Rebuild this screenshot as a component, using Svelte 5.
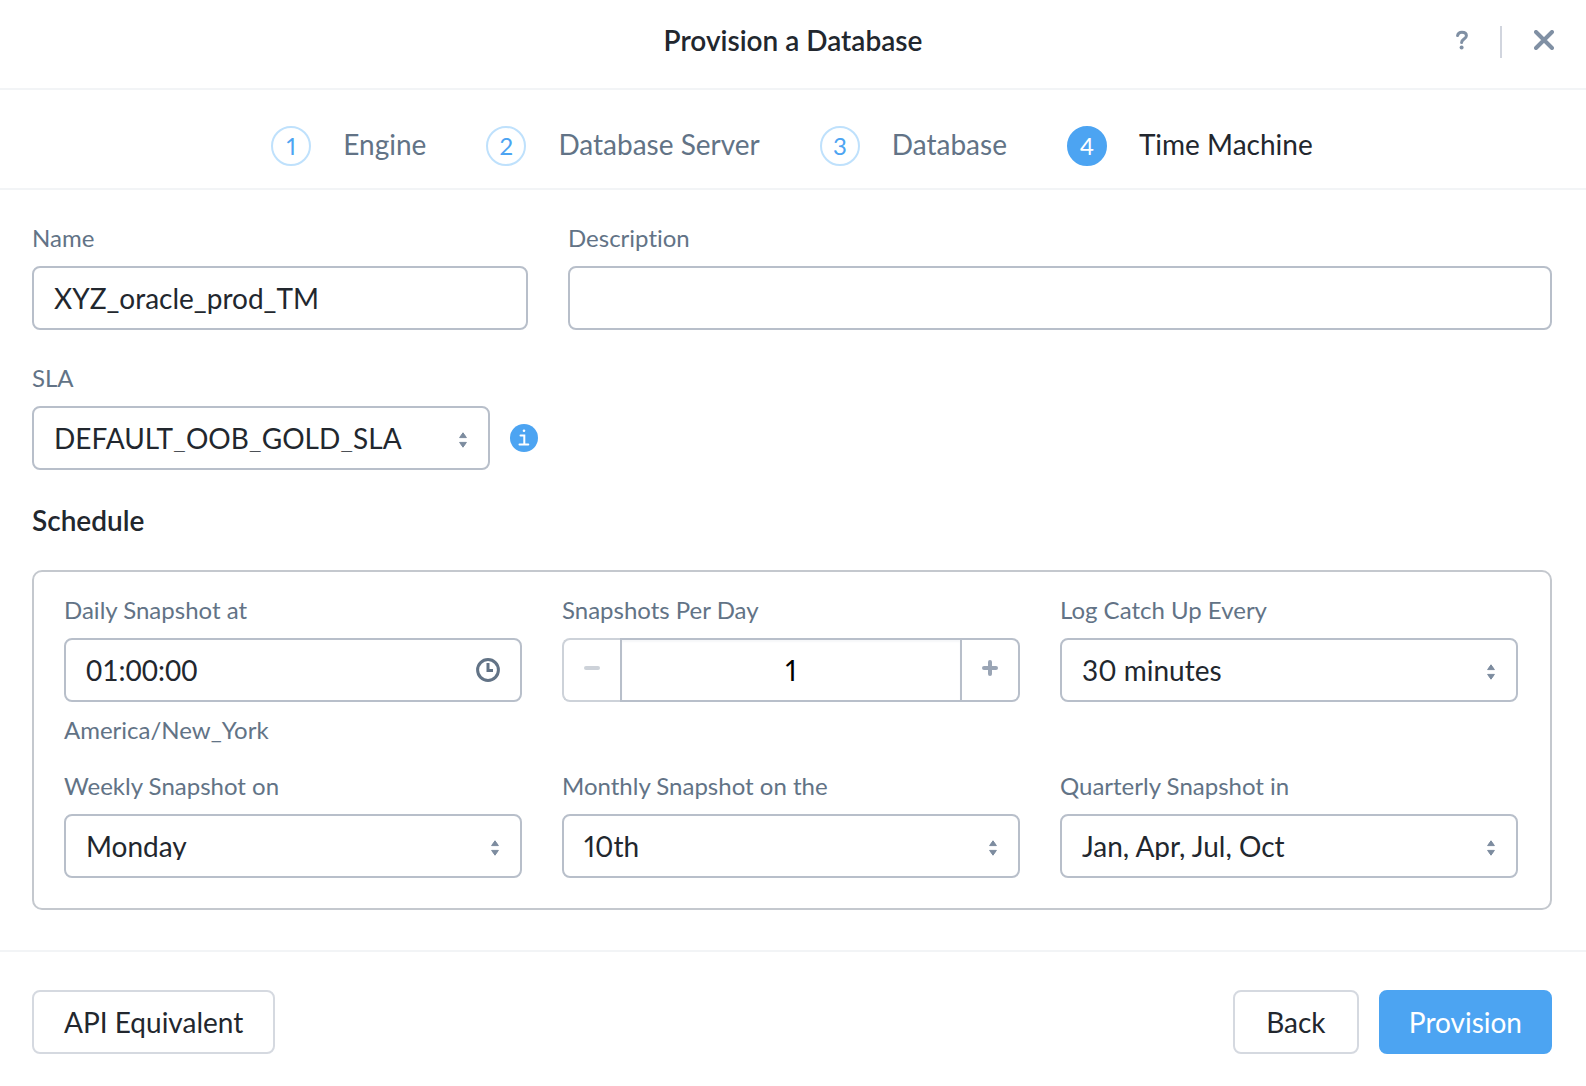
<script>
  const steps = ['Engine', 'Database Server', 'Database', 'Time Machine'];
  const current = 3;

  let name = $state('XYZ_oracle_prod_TM');
  let description = $state('');
  let time = $state('01:00:00');
  let perDay = $state(1);
</script>

{#snippet picker(id, options)}
  <div class="control">
    <select {id} class="field">
      {#each options as option}
        <option>{option}</option>
      {/each}
    </select>
    <svg class="arrows" viewBox="0 0 8 16" aria-hidden="true">
      <path d="M4 0.8 7.4 5.600H0.6ZM4 15.2 7.4 10.400H0.6Z" />
    </svg>
  </div>
{/snippet}

<div class="dialog">
  <header class="titlebar">
    <h1>Provision a Database</h1>
    <div class="tools">
      <button class="tool" aria-label="Help">
        <svg class="help" viewBox="1 0 12 20" aria-hidden="true">
          <path d="M2.600 5.600C3 3.400 4.600 2.200 6.900 2.200c2.700 0 4.500 1.400 4.500 3.600 0 3.200-4.800 3.300-4.800 6.600" />
          <circle cx="6.600" cy="17.600" r="2" />
        </svg>
      </button>
      <span class="divider"></span>
      <button class="tool" aria-label="Close">
        <svg class="close" viewBox="0 0 20 20" aria-hidden="true">
          <path d="M2 2 18 18M18 2 2 18" />
        </svg>
      </button>
    </div>
  </header>

  <ol class="steps">
    {#each steps as step, i}
      <li class="step" class:active={i === current}>
        <span class="number">{i + 1}</span>
        <span class="title">{step}</span>
      </li>
    {/each}
  </ol>

  <main class="body">
    <div class="row identity">
      <div class="group">
        <label for="name">Name</label>
        <input id="name" class="field" type="text" bind:value={name} />
      </div>
      <div class="group">
        <label for="description">Description</label>
        <input id="description" class="field" type="text" bind:value={description} />
      </div>
    </div>

    <div class="group">
      <label for="sla">SLA</label>
      <div class="sla">
        {@render picker('sla', ['DEFAULT_OOB_GOLD_SLA'])}
        <button class="info" aria-label="SLA details">
          <svg viewBox="0 0 28 28" aria-hidden="true">
            <circle cx="14" cy="14" r="14" />
            <path d="M10.500 11.500h3.800v9M9.500 20.500h8.800" />
            <rect x="12.700" y="5.500" width="2.600" height="2.600" rx="1.300" />
          </svg>
        </button>
      </div>
    </div>

    <h2>Schedule</h2>

    <section class="panel">
      <div class="row">
        <div class="group">
          <label for="daily">Daily Snapshot at</label>
          <div class="control">
            <input id="daily" class="field time" type="text" bind:value={time} />
            <svg class="clock" viewBox="0 0 24 24" aria-hidden="true">
              <circle cx="12" cy="12" r="10.400" />
              <path d="M12 5v7.400h5" />
            </svg>
          </div>
          <p class="hint">America/New_York</p>
        </div>
        <div class="group">
          <label for="perday">Snapshots Per Day</label>
          <div class="stepper">
            <button class="less" aria-label="Fewer" disabled={perDay <= 1} onclick={() => (perDay -= 1)}>
              <svg viewBox="0 0 16 16" aria-hidden="true"><path d="M2 8h12" /></svg>
            </button>
            <input id="perday" type="text" inputmode="numeric" bind:value={perDay} />
            <button class="more" aria-label="More" onclick={() => (perDay += 1)}>
              <svg viewBox="0 0 16 16" aria-hidden="true"><path d="M2 8h12M8 2v12" /></svg>
            </button>
          </div>
        </div>
        <div class="group">
          <label for="log">Log Catch Up Every</label>
          {@render picker('log', ['30 minutes'])}
        </div>
      </div>

      <div class="row">
        <div class="group">
          <label for="weekly">Weekly Snapshot on</label>
          {@render picker('weekly', ['Monday'])}
        </div>
        <div class="group">
          <label for="monthly">Monthly Snapshot on the</label>
          {@render picker('monthly', ['10th'])}
        </div>
        <div class="group">
          <label for="quarterly">Quarterly Snapshot in</label>
          {@render picker('quarterly', ['Jan, Apr, Jul, Oct'])}
        </div>
      </div>
    </section>
  </main>

  <footer class="actions">
    <button class="button">API Equivalent</button>
    <button class="button back">Back</button>
    <button class="button primary">Provision</button>
  </footer>
</div>

<style>
  :global(body) {
    margin: 0;
    background: #fff;
  }

  .dialog {
    --ink: #22272e;
    --muted: #627386;
    --icon: #8090a4;
    --line: #b8bfca;
    --rule: #f2f4f6;
    --blue: #4ca4f2;
    font-family: Lato, 'Open Sans', sans-serif;
    font-size: 28px;
    line-height: 28px;
    font-variant-ligatures: none;
    font-variant-numeric: proportional-nums;
    color: var(--ink);
    background: #fff;
  }

  .dialog * {
    box-sizing: border-box;
  }

  h1,
  h2,
  p,
  ol {
    margin: 0;
    padding: 0;
  }

  h1,
  h2 {
    font-size: 28px;
    line-height: 28px;
    font-weight: 600;
  }

  button,
  input,
  select {
    font: inherit;
    font-variant-ligatures: none;
    font-variant-numeric: proportional-nums;
    color: inherit;
    margin: 0;
  }

  button {
    padding: 0;
    border: 0;
    background: none;
    cursor: pointer;
  }

  svg {
    display: block;
  }

  .titlebar {
    display: grid;
    grid-template-columns: 1fr auto 1fr;
    align-items: center;
    padding: 26px 32px 30px;
    border-bottom: 2px solid var(--rule);
  }

  h1 {
    grid-column: 2;
    padding-bottom: 4px;
  }

  .tools {
    display: flex;
    align-items: center;
    justify-content: flex-end;
    gap: 32px;
  }

  .tool {
    padding-bottom: 4px;
  }

  .help {
    width: 12px;
    height: 20px;
    fill: var(--icon);
  }

  .help path {
    fill: none;
    stroke: var(--icon);
    stroke-width: 3;
    stroke-linecap: round;
  }

  .close {
    width: 20px;
    height: 20px;
    stroke: var(--icon);
    stroke-width: 4;
    stroke-linecap: round;
  }

  .divider {
    width: 2px;
    height: 32px;
    background: #d1d5de;
  }

  .steps {
    display: flex;
    justify-content: center;
    gap: 60px;
    padding: 36px 34px 22px 32px;
    border-bottom: 2px solid var(--rule);
    list-style: none;
    color: var(--muted);
  }

  .step {
    display: flex;
    align-items: center;
    gap: 32px;
  }

  .title {
    padding-bottom: 4px;
  }

  .number {
    display: grid;
    place-items: center;
    width: 40px;
    height: 40px;
    border: 2px solid #bfe1fc;
    border-radius: 50%;
    font-size: 24px;
    color: var(--blue);
  }

  .active {
    color: var(--ink);
  }

  .active .number {
    border-color: var(--blue);
    background: var(--blue);
    color: #fff;
  }

  .body {
    display: flex;
    flex-direction: column;
    gap: 36px;
    padding: 36px 34px 40px 32px;
  }

  .row {
    display: grid;
    grid-template-columns: repeat(3, 1fr);
    align-items: start;
    gap: 40px;
  }

  .identity {
    grid-template-columns: 124fr 246fr;
  }

  .group {
    display: flex;
    flex-direction: column;
    gap: 16px;
    min-width: 0;
  }

  label,
  .hint {
    font-size: 24px;
    line-height: 24px;
    color: var(--muted);
  }

  .field {
    display: block;
    width: 100%;
    height: 64px;
    padding: 0 20px;
    border: 2px solid var(--line);
    border-radius: 8px;
    background: #fff;
    appearance: none;
    outline: none;
  }

  .time {
    font-variant-numeric: tabular-nums;
  }

  .control {
    position: relative;
  }

  .arrows {
    position: absolute;
    top: 26px;
    right: 23px;
    width: 8px;
    height: 16px;
    fill: #7d8c9f;
    stroke: #7d8c9f;
    stroke-linejoin: round;
    pointer-events: none;
  }

  .clock {
    position: absolute;
    top: 20px;
    right: 22px;
    width: 24px;
    height: 24px;
    fill: none;
    stroke: var(--muted);
    stroke-width: 3;
    pointer-events: none;
  }

  .sla {
    display: grid;
    grid-template-columns: 458fr 1042fr;
    align-items: center;
    gap: 20px;
  }

  .info {
    width: 28px;
    height: 28px;
  }

  .info circle {
    fill: var(--blue);
  }

  .info rect {
    fill: #fff;
  }

  .info path {
    fill: none;
    stroke: #fff;
    stroke-width: 2;
    stroke-linecap: round;
  }

  .panel {
    display: flex;
    flex-direction: column;
    gap: 32px;
    padding: 26px 32px 30px 30px;
    border: 2px solid #c4c8ce;
    border-radius: 10px;
  }

  .stepper {
    display: flex;
    height: 64px;
  }

  .stepper button {
    display: grid;
    place-items: center;
    flex: none;
    width: 58px;
    padding-bottom: 4px;
    border: 2px solid var(--line);
  }

  .stepper .less {
    border-color: #cdd2d9;
    border-right: 0;
    border-radius: 8px 0 0 8px;
  }

  .stepper .more {
    border-left: 0;
    border-radius: 0 8px 8px 0;
  }

  .stepper svg {
    width: 16px;
    height: 16px;
    stroke: #9aa5b5;
    stroke-width: 4;
    stroke-linecap: round;
  }

  .stepper .less svg {
    stroke: #cdd2d9;
  }

  .stepper input {
    flex: 1;
    min-width: 0;
    padding: 0;
    border: 2px solid var(--line);
    border-radius: 0;
    background: #fff;
    box-shadow: inset 0 2px 2px #f6f7f9;
    color: #000;
    text-align: center;
    outline: none;
  }

  .actions {
    display: flex;
    gap: 20px;
    padding: 38px 34px 32px 32px;
    border-top: 2px solid var(--rule);
  }

  .button {
    min-width: 126px;
    height: 64px;
    padding: 0 30px;
    border: 2px solid #d5d9e0;
    border-radius: 8px;
    background: #fff;
  }

  .back {
    margin-left: auto;
  }

  .primary {
    padding: 0 28px;
    border-color: var(--blue);
    background: var(--blue);
    color: #fff;
  }
</style>
